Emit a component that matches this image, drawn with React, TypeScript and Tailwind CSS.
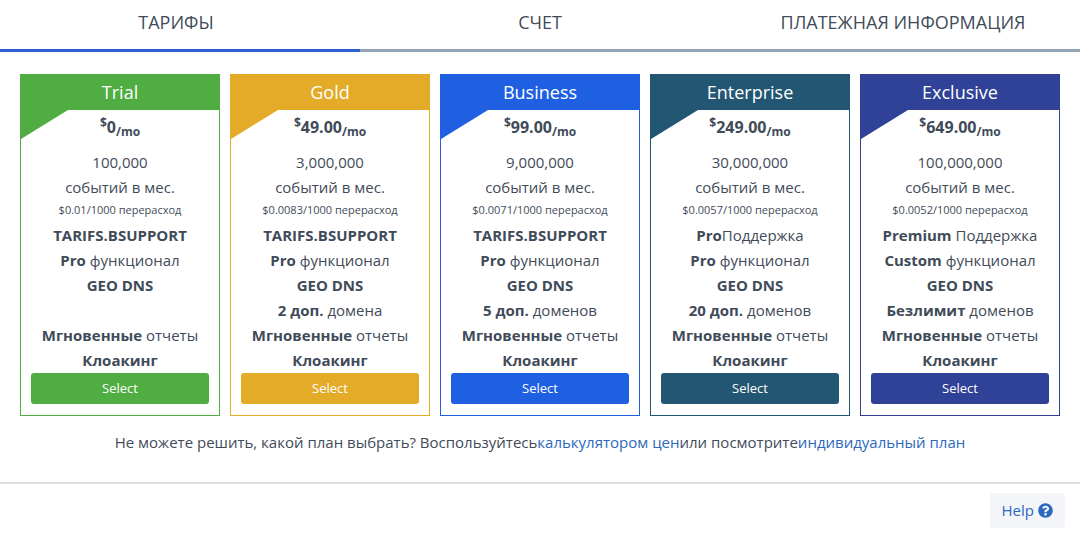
import { useState } from "react";
import clsx from "clsx";
import { FaQuestionCircle } from "react-icons/fa";

type Feature = { strong?: string; text?: string };

type Plan = {
  name: string;
  price: string;
  events: string;
  overage: string;
  border: string;
  bg: string;
  fill: string;
  features: Feature[];
};

const tabs = ["ТАРИФЫ", "СЧЕТ", "ПЛАТЕЖНАЯ ИНФОРМАЦИЯ"];

const plans: Plan[] = [
  {
    name: "Trial",
    price: "0",
    events: "100,000",
    overage: "$0.01/1000 перерасход",
    border: "border-[#4fad42]",
    bg: "bg-[#4fad42]",
    fill: "fill-[#4fad42]",
    features: [
      { strong: "TARIFS.BSUPPORT" },
      { strong: "Pro", text: " функционал" },
      { strong: "GEO DNS" },
      {},
      { strong: "Мгновенные", text: " отчеты" },
      { strong: "Клоакинг" },
    ],
  },
  {
    name: "Gold",
    price: "49.00",
    events: "3,000,000",
    overage: "$0.0083/1000 перерасход",
    border: "border-[#e3ab27]",
    bg: "bg-[#e3ab27]",
    fill: "fill-[#e3ab27]",
    features: [
      { strong: "TARIFS.BSUPPORT" },
      { strong: "Pro", text: " функционал" },
      { strong: "GEO DNS" },
      { strong: "2 доп.", text: " домена" },
      { strong: "Мгновенные", text: " отчеты" },
      { strong: "Клоакинг" },
    ],
  },
  {
    name: "Business",
    price: "99.00",
    events: "9,000,000",
    overage: "$0.0071/1000 перерасход",
    border: "border-[#1f60e2]",
    bg: "bg-[#1f60e2]",
    fill: "fill-[#1f60e2]",
    features: [
      { strong: "TARIFS.BSUPPORT" },
      { strong: "Pro", text: " функционал" },
      { strong: "GEO DNS" },
      { strong: "5 доп.", text: " доменов" },
      { strong: "Мгновенные", text: " отчеты" },
      { strong: "Клоакинг" },
    ],
  },
  {
    name: "Enterprise",
    price: "249.00",
    events: "30,000,000",
    overage: "$0.0057/1000 перерасход",
    border: "border-[#235672]",
    bg: "bg-[#235672]",
    fill: "fill-[#235672]",
    features: [
      { strong: "Pro", text: "Поддержка" },
      { strong: "Pro", text: " функционал" },
      { strong: "GEO DNS" },
      { strong: "20 доп.", text: " доменов" },
      { strong: "Мгновенные", text: " отчеты" },
      { strong: "Клоакинг" },
    ],
  },
  {
    name: "Exclusive",
    price: "649.00",
    events: "100,000,000",
    overage: "$0.0052/1000 перерасход",
    border: "border-[#2f4298]",
    bg: "bg-[#2f4298]",
    fill: "fill-[#2f4298]",
    features: [
      { strong: "Premium", text: " Поддержка" },
      { strong: "Custom", text: " функционал" },
      { strong: "GEO DNS" },
      { strong: "Безлимит", text: " доменов" },
      { strong: "Мгновенные", text: " отчеты" },
      { strong: "Клоакинг" },
    ],
  },
];

function PlanCard({ plan }: { plan: Plan }) {
  return (
    <article className={clsx("flex flex-col border text-center text-[15px] leading-[25px]", plan.border)}>
      <h2 className={clsx("h-[35px] text-lg leading-[35px] text-white", plan.bg)}>{plan.name}</h2>
      <div className="relative flex flex-1 flex-col px-2.5 pb-[11px]">
        {/* folded ribbon corner under the header */}
        <svg viewBox="0 0 47 29" className={clsx("absolute top-0 left-0 h-[29px] w-[47px]", plan.fill)} aria-hidden="true">
          <path d="M0 0H47L0 29Z" />
        </svg>
        <p className="h-10 text-base leading-[34px] font-bold">
          <sup className="text-xs">$</sup>
          {plan.price}
          <sub className="text-xs">/mo</sub>
        </p>
        <p>{plan.events}</p>
        <p>событий в мес.</p>
        <p className="mb-[3px] text-[11px] leading-5">{plan.overage}</p>
        <ul className="-mx-2">
          {plan.features.map((f, i) => (
            <li key={i} className="h-[25px]">
              {f.strong && <strong>{f.strong}</strong>}
              {f.text}
            </li>
          ))}
        </ul>
        <button type="button" className={clsx("h-[31px] rounded-[3px] text-[13px] font-medium text-white", plan.bg)}>
          Select
        </button>
      </div>
    </article>
  );
}

export default function App() {
  const [active, setActive] = useState(0);

  return (
    <div className="bg-white font-['Open_Sans',sans-serif] text-[#3f4b59]">
      <nav className="grid grid-cols-3">
        {tabs.map((tab, i) => (
          <button
            key={tab}
            type="button"
            onClick={() => setActive(i)}
            className={clsx(
              "h-13 border-b-3 pb-1.5 text-lg",
              i === 0 && "pr-2",
              i === 2 && "pl-1.5",
              i === active ? "border-[#2d62d3]" : "border-[#93a3b3]"
            )}
          >
            {tab}
          </button>
        ))}
      </nav>

      <main className="px-5 pt-[22px]">
        <div className="grid grid-cols-5 gap-2.5">
          {plans.map((plan) => (
            <PlanCard key={plan.name} plan={plan} />
          ))}
        </div>
        <p className="pt-3.5 text-center text-[15px] leading-[25px]">
          Не можете решить, какой план выбрать? Воспользуйтесь
          <a href="#calculator" className="text-[#2c68bd]">калькулятором цен</a>
          или посмотрите
          <a href="#custom" className="text-[#2c68bd]">индивидуальный план</a>
        </p>
      </main>

      <footer className="mt-[27px] flex justify-end border-t-2 border-[#dcdfe1] px-[15px] pt-[9px]">
        <button type="button" className="flex h-[35px] items-center gap-1 rounded-[3px] bg-[#f3f5f8] px-3 text-[15px] text-[#2c68bd]">
          Help
          <FaQuestionCircle size={15} />
        </button>
      </footer>
    </div>
  );
}
